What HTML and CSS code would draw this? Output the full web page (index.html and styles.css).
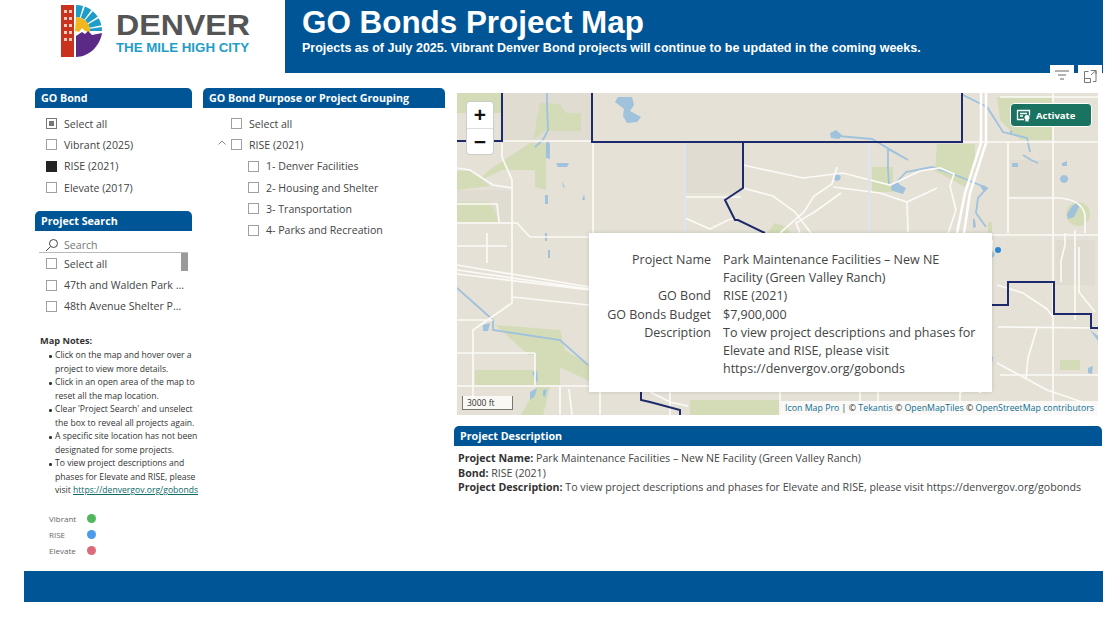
FILE: index.html
```html
<!DOCTYPE html>
<html lang="en">
<head>
<meta charset="utf-8">
<title>GO Bonds Project Map</title>
<link rel="stylesheet" href="styles.css">
</head>
<body>
<div class="page">
  <header class="top">
    <div class="logo-cell">
      <svg class="logo" width="195" height="60" viewBox="0 0 195 60">
        <path d="M0 5h13v52H0z" fill="#c8321e"/>
        <g fill="#f3c9b8">
          <rect x="3" y="10" width="3" height="3"/><rect x="8" y="10" width="3" height="3"/>
          <rect x="3" y="17" width="3" height="3"/><rect x="8" y="17" width="3" height="3"/>
          <rect x="3" y="24" width="3" height="3"/><rect x="8" y="24" width="3" height="3"/>
          <rect x="3" y="31" width="3" height="3"/><rect x="8" y="31" width="3" height="3"/>
          <rect x="3" y="38" width="3" height="3"/><rect x="8" y="38" width="3" height="3"/>
        </g>
        <path d="M15 11A20 20 0 0 1 35 31" fill="none" stroke="#1f9dc8" stroke-width="12" stroke-dasharray="5.600 1.400"/>
        <path d="M15 17a14 14 0 0 1 14 15l-5-1-3-3-3 4-3-1-1 1z" fill="#f3b71e"/>
        <path d="M15 36l6-4 3 2 3-3 4 4 10-2c-2 13-13 24-26 24z" fill="#5b2a86"/>
        <text x="55" y="35" class="logo-name" textLength="134" lengthAdjust="spacingAndGlyphs">DENVER</text>
        <text x="55" y="52" class="logo-tag" textLength="133" lengthAdjust="spacingAndGlyphs">THE MILE HIGH CITY</text>
      </svg>
    </div>
    <div class="banner">
      <h1>GO Bonds Project Map</h1>
      <p>Projects as of July 2025. Vibrant Denver Bond projects will continue to be updated in the coming weeks.</p>
    </div>
    <div class="visual-tools">
      <span class="tool"><svg width="14" height="12" viewBox="0 0 14 12"><path d="M0 1h14M3 5h8M5 9h4" stroke="#666" fill="none"/></svg></span>
      <span class="tool"><svg width="14" height="14" viewBox="0 0 14 14"><path d="M5.500 2.500H1.500v11h6v-4h-6M8 1.500h5v11H10M8 6l5-4.500M9.500 1.500H13V5" stroke="#777" fill="none"/></svg></span>
    </div>
  </header>

  <main class="content">
    <div class="col-a">
      <section class="slicer">
        <h2 class="panel-head">GO Bond</h2>
        <ul class="list list-bond">
          <li><i class="box partial"></i>Select all</li>
          <li><i class="box"></i>Vibrant (2025)</li>
          <li><i class="box filled"></i>RISE (2021)</li>
          <li><i class="box"></i>Elevate (2017)</li>
        </ul>
      </section>
      <section class="slicer search-slicer">
        <h2 class="panel-head">Project Search</h2>
        <div class="search-row">
          <svg width="14" height="14" viewBox="0 0 14 14"><circle cx="8.500" cy="5.500" r="4" stroke="#444" fill="none"/><path d="M5.500 8.500L1 13" stroke="#444" fill="none"/></svg>
          <span>Search</span>
        </div>
        <div class="search-list">
          <ul class="list">
            <li><i class="box"></i>Select all</li>
            <li><i class="box"></i><span class="clip">47th and Walden Park Improvements</span></li>
            <li><i class="box"></i><span class="clip">48th Avenue Shelter Purchase</span></li>
          </ul>
          <span class="thumb"></span>
        </div>
      </section>
      <section class="notes">
        <h3>Map Notes:</h3>
        <ul>
          <li>Click on the map and hover over a project to view more details.</li>
          <li>Click in an open area of the map to reset all the map location.</li>
          <li>Clear 'Project Search' and unselect the box to reveal all projects again.</li>
          <li>A specific site location has not been designated for some projects.</li>
          <li>To view project descriptions and phases for Elevate and RISE, please visit <a href="#">https://denvergov.org/gobonds</a></li>
        </ul>
      </section>
      <ul class="legend">
        <li><span>Vibrant</span><i class="dot green"></i></li>
        <li><span>RISE</span><i class="dot blue"></i></li>
        <li><span>Elevate</span><i class="dot red"></i></li>
      </ul>
    </div>

    <div class="col-b">
      <h2 class="panel-head">GO Bond Purpose or Project Grouping</h2>
      <ul class="list tree">
        <li><i class="box"></i>Select all</li>
        <li class="branch"><svg class="chev" width="8" height="5" viewBox="0 0 8 5"><path d="M.5 4.500L4 1l3.500 3.500" stroke="#888" fill="none"/></svg><i class="box"></i>RISE (2021)</li>
        <li class="leaf"><i class="box"></i>1- Denver Facilities</li>
        <li class="leaf"><i class="box"></i>2- Housing and Shelter</li>
        <li class="leaf"><i class="box"></i>3- Transportation</li>
        <li class="leaf"><i class="box"></i>4- Parks and Recreation</li>
      </ul>
    </div>

    <div class="col-c">
      <div class="map">
        <svg class="map-art" width="641" height="322" viewBox="457 93 641 322">
          <rect x="457" y="93" width="641" height="322" fill="#e5e1d6"/>
          <g class="shade">
            <rect x="503" y="93" width="88" height="48"/>
            <rect x="686" y="143" width="56" height="50"/>
            <rect x="457" y="190" width="55" height="32"/>
            <rect x="1010" y="160" width="42" height="36"/>
            <rect x="1055" y="240" width="40" height="45"/>
          </g>
          <g class="park">
            <path d="M457 93h45v20h-45z"/>
            <path d="M540 103l20 1 6 9h15v18h-36l-12 9z"/>
            <path d="M530 143h16v47l-11-3v-17h-33l-25 12 12-12z"/>
            <path d="M457 171h14l19 15-33 4z"/>
            <path d="M457 202h33l10 20h-43z"/>
            <path d="M872 167h21v25h-21z"/>
            <path d="M937 144h38v26l-10 17-30-16z"/>
            <path d="M997 97h55v43h-32l-20-20z"/>
            <circle cx="1078" cy="214" r="12"/>
            <path d="M767 233l8-10 12 4 3 6z"/>
            <path d="M495 325l65 5 5 20 24 15v16l-54-26h-6l-34-30z"/>
            <path d="M535 353h25v32h-85v-15h60z"/>
            <path d="M522 413l15-26h13l-7 28h-21z"/>
            <path d="M690 400h90v15h-90z"/>
            <path d="M1060 360h20v10h-20z"/>
            <path d="M992 262h-4v-40h4z"/>
          </g>
          <g class="water-fill">
            <path d="M618 97h14l2 8-4 6 11 6-4 5-10 1-4-7 1-7-9-7z"/>
            <path d="M556 163h13l-2 4h-9zM562 181l3 7-2-1zM545 195h3v9h-3zM584 194l1 6h-3zM546 142h3v16h-3zM545 233h2v8h-2zM548 250h2v8h-2z"/>
            <path d="M830 133l6-3 6 5-3 4-8-1z"/>
            <path d="M892 184l5-3 3 4 6 3-3 6-7-2-5-2z"/>
            <path d="M980 186l4-1 3 4-3 3zM973 218l2 2 1 7-3 1zM1072 206l5-3 2 4-5 10-6 2-1-5zM1064 175a4 4 0 1 0 .1 0zM837 174a3.500 3.500 0 1 0 .1 0zM990 252l3-1 2 4-3 3zM1010 130l3 2-3 2zM1012 163h6v4h-6zM1062 163l5-2v5h-5zM1090 330l8 6v5zM985 356l8 1-1 7zM1088 368l5-2-1 8-4-1zM483 325l7-2-2 8-5 0zM532 372l5-1 1 9-2 3zM530 392l7-4-2 8-5 4zM543 390l4-1-2 8-2-1z"/>
          </g>
          <g class="stream">
            <path d="M547 93v10l1 27-5 10-8 7M549 143v16"/>
            <path d="M963 95l24 12 16 25 24 6 3 14M1023 155l8 5 7 3"/>
            <path d="M838 136l34 3 36 21-20-11v20l1 16M892 187l14-15 26-5 26 9 29 12-9 10-2 15 10 14"/>
            <path d="M457 288l36 32 0 10 67 10 28 25"/>
          </g>
          <g class="road">
            <path d="M502 141h90M593 141v92M502 143v14l10 23v60"/>
            <path d="M457 168l13 2 23 15 19 3M457 223h60l13 14h59"/>
            <path d="M457 204h40l2 18M487 233v30M457 246h50"/>
            <path d="M457 265l133 22M457 270l133 19M457 274l133 16"/>
            <path d="M512 233v70l-39 27v70M512 297l77 8M457 320h36M457 353h78M457 386h132"/>
            <path d="M535 353v32M560 386v29M572 415l-3-26"/>
            <path d="M685 197h56M685 218l25 11 18-9 7-2M743 165l60 13 40-5 47 12 30-14 20-3 14 6-4 12 6 24-10 30"/>
            <path d="M743 188l30 8 22 16 16 21M780 233l24-21 10-16 18-12 5-17M800 233l-4-10 20-12 25-18"/>
            <path d="M833 187l47 6 27 9 30-14M907 202l1 30"/>
            <path d="M1008 143v90M1053 93v322M1008 198h52q22 2 25 17v7M992 235h106M1000 97h98M962 142h136"/>
            <path d="M1085 222v11M1079 247v45l16 20M1065 233v12l-4 16v21"/>
            <path d="M998 327l99 1M1000 375h98M997 363l50 27 50 17M997 285l26 8 24 16 6 8M1037 328l-9 30-2 20M1075 230v90"/>
            <path d="M860 392v23M878 392v23M960 392v23M650 392l20 10 18 4"/>
            <path d="M600 392v23M670 392v23M780 392v23"/>
          </g>
          <g class="road road-light">
            <path d="M685 143v90M869 142v91"/>
          </g>
          <g class="road road-wide">
            <path d="M981 93v50l-16 50-8 40"/>
            <path d="M986 93v50l-16 50-6 40"/>
            <path d="M983 235l-22 158M992 240l-12 153"/>
          </g>
          <g class="boundary">
            <path d="M502 93v48h-45"/>
            <path d="M592 93v49h370v-49"/>
            <path d="M743 142v46l-18 12 10 20 3 0 27 13"/>
            <path d="M992 305h16v-23h46v32h37v14h7"/>
            <path d="M641 392v8l9 2 30 8v5"/>
          </g>
          <circle cx="998" cy="250" r="3" fill="#2c86d6"/>
        </svg>
        <div class="zoom-ctl">
          <button class="zoom-btn">+</button>
          <button class="zoom-btn">−</button>
        </div>
        <div class="activate">
          <svg width="15" height="13" viewBox="0 0 15 13"><path d="M8 10.500H1.500V1.500h12v5M4 4.500h7M4 7h3" stroke="#fff" stroke-width="1.300" fill="none"/><circle cx="11" cy="8.500" r="2.500" fill="#fff"/><path d="M9.500 10.500v2.500l1.500-1 1.500 1v-2.500" fill="#fff"/></svg>
          <span>Activate</span>
        </div>
        <div class="scale">3000 ft</div>
        <div class="attrib">
          <a href="#">Icon Map Pro</a> | © <a href="#">Tekantis</a> © <a href="#">OpenMapTiles</a> © <a href="#">OpenStreetMap contributors</a>
        </div>
        <dl class="tip">
          <dt>Project Name</dt><dd>Park Maintenance Facilities – New NE Facility (Green Valley Ranch)</dd>
          <dt>GO Bond</dt><dd>RISE (2021)</dd>
          <dt>GO Bonds Budget</dt><dd>$7,900,000</dd>
          <dt>Description</dt><dd>To view project descriptions and phases for Elevate and RISE, please visit https://denvergov.org/gobonds</dd>
        </dl>
      </div>
      <section class="desc">
        <h2 class="panel-head">Project Description</h2>
        <div class="desc-body">
          <p><b>Project Name:</b> Park Maintenance Facilities – New NE Facility (Green Valley Ranch)</p>
          <p><b>Bond:</b> RISE (2021)</p>
          <p><b>Project Description:</b> To view project descriptions and phases for Elevate and RISE, please visit https://denvergov.org/gobonds</p>
        </div>
      </section>
    </div>
  </main>
  <footer class="foot"></footer>
</div>
</body>
</html>
```
FILE: styles.css
```css
* { box-sizing: border-box; }
html, body { margin: 0; padding: 0; background: #fff; }
body { font-family: "Open Sans", "Noto Sans", sans-serif; color: #333; overflow: hidden; }
.page { width: 1117px; height: 622px; position: relative; }
ul { list-style: none; margin: 0; padding: 0; }

.top { display: flex; height: 73px; padding-right: 14px; position: relative; }
.logo-cell { width: 285px; padding: 0 0 0 61px; }
.logo { display: block; }
.logo-name { font: bold 30px "Liberation Sans", sans-serif; fill: #555556; }
.logo-tag { font: bold 13px "Liberation Sans", sans-serif; fill: #1f9dc8; }
.banner { flex: 1; background: #005596; color: #fff; padding: 6px 0 0 17px; }
.banner h1 { margin: 0; font: bold 31.400px/34px "Liberation Sans", sans-serif; }
.banner p { margin: 0; font: bold 12.500px/16px "Liberation Sans", sans-serif; }
.visual-tools { position: absolute; left: 1050px; top: 65px; display: flex; gap: 4px; }
.tool { width: 24px; height: 21px; background: #fff; display: flex; align-items: center; justify-content: center; }

.content { display: flex; height: 498px; padding-top: 15px; }
.col-a { width: 157px; margin-left: 35px; }
.col-b { width: 242px; margin-left: 11px; }
.col-c { width: 648px; margin-left: 9px; }

.panel-head {
  margin: 0; height: 20px; padding-left: 6px;
  background: #005596; color: #fff; border-radius: 5px 5px 0 0;
  font-size: 10.700px; line-height: 21px; font-weight: 700;
}
.list li { height: 21.300px; display: flex; align-items: center; font-size: 10.600px; color: #444; white-space: nowrap; }
.box { flex: none; width: 11px; height: 11px; margin-right: 7px; border: 1px solid #a0a0a0; background: #fff; display: block; }
.box.partial { border-color: #777; background: #777; box-shadow: inset 0 0 0 2px #fff; }
.box.filled { background: #252423; border-color: #252423; }
.list-bond { padding: 5px 0 0 11px; }

.search-slicer { margin-top: 13px; }
.search-row { display: flex; align-items: center; height: 22px; margin: 0 4px; padding: 6px 0 0 6px; gap: 5px; border-bottom: 1px solid #bbb; font-size: 10.600px; color: #777; }
.search-list { position: relative; padding-left: 11px; }
.clip { display: block; width: 122px; overflow: hidden; text-overflow: ellipsis; }
.thumb { position: absolute; right: 4px; top: 0; width: 7px; height: 18px; background: #9a9a9a; }

.notes { margin: 17px 0 0 5px; width: 165px; font-size: 8.600px; line-height: 13.500px; color: #333; }
.notes h3 { margin: 0 0 1px; font-size: 9.200px; line-height: 14px; font-weight: 700; }
.notes li { position: relative; padding-left: 15px; }
.notes li::before { content: ""; position: absolute; left: 9px; top: 6px; width: 2.500px; height: 2.500px; border-radius: 50%; background: #333; }
.notes a { color: #0d6a6a; }
.legend { margin: 13px 0 0 14px; }
.legend li { display: flex; align-items: center; height: 16px; font-size: 8px; color: #666; }
.legend span { width: 38px; }
.dot { display: block; width: 9px; height: 9px; border-radius: 50%; }
.green { background: #4fb85a; }
.blue { background: #4a9bea; }
.red { background: #dc6a78; }

.tree { padding: 5px 0 0 28px; }
.tree .branch { position: relative; }
.chev { position: absolute; left: -13px; top: 6px; }
.tree .leaf { padding-left: 17px; }

.map { position: relative; width: 641px; height: 322px; margin: 5px 0 0 3px; overflow: hidden; }
.map-art { display: block; }
.shade rect { fill: #e1dcd1; }
.park path, .park circle { fill: #d3dcb7; }
.water-fill path { fill: #a0c2dc; }
.stream path { fill: none; stroke: #a0c2dc; stroke-width: 1.800; }
.road path { fill: none; stroke: #fbfaf6; stroke-width: 1.700; }
.road-light path { stroke: #dbe5ef; stroke-width: 2; }
.road-wide path { stroke: #fff; stroke-width: 2.500; }
.boundary path { fill: none; stroke: #1d2a6b; stroke-width: 2; }

.zoom-ctl { position: absolute; left: 10px; top: 9px; width: 26px; background: #fff; border-radius: 3px; box-shadow: 0 0 0 1px #ccc; }
.zoom-btn { display: block; width: 26px; height: 26px; padding: 0; border: 0; background: transparent; font: 700 21px/24px "Liberation Sans", sans-serif; color: #111; }
.zoom-btn + .zoom-btn { border-top: 1px solid #ddd; }

.activate { position: absolute; left: 553px; top: 10px; width: 82px; height: 24px; display: flex; align-items: center; gap: 5px; padding-left: 5px; background: #1a7360; color: #fff; border: 1.500px solid #fff; border-radius: 4px; font-size: 9.500px; font-weight: 700; }

.scale { position: absolute; left: 5px; top: 303px; width: 51px; height: 14px; padding-left: 4px; border: 1px solid #777; border-top: 0; background: rgba(255,255,255,.75); font-size: 8.500px; line-height: 13px; color: #333; }
.attrib { position: absolute; right: 0; bottom: 0; height: 14px; padding: 0 4px; background: rgba(255,255,255,.8); font-size: 8.800px; line-height: 14px; color: #333; white-space: nowrap; }
.attrib a { color: #0f6f8f; text-decoration: none; }

.tip {
  position: absolute; left: 132px; top: 140px; width: 403px; height: 159px; margin: 0; padding: 18px 13px 0 0;
  display: grid; grid-template-columns: 122px 1fr; column-gap: 12px; row-gap: 1px; align-content: start;
  background: #fff; box-shadow: 0 0 4px rgba(0,0,0,.15);
  font-size: 12.500px; line-height: 17.600px; color: #444;
}
.tip dt { text-align: right; }
.tip dd { margin: 0; }

.desc { margin-top: 11px; }
.desc-body { padding: 5px 0 0 4px; font-size: 10.640px; line-height: 14.500px; color: #444; }
.desc-body p { margin: 0; }
.desc-body b { color: #333; }

.foot { height: 31px; margin-left: 24px; width: 1079px; background: #005596; }
```
